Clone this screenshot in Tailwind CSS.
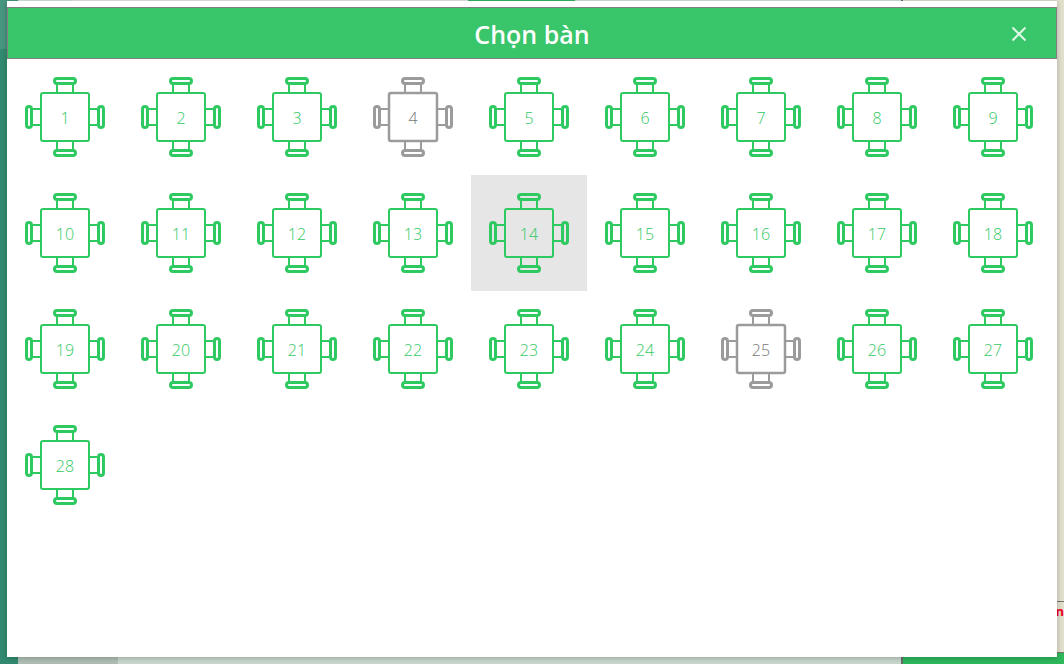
<!DOCTYPE html>
<html lang="vi">
<head>
<meta charset="utf-8">
<meta name="viewport" content="width=device-width, initial-scale=1">
<title>Chọn bàn</title>
<script src="https://cdn.jsdelivr.net/npm/@tailwindcss/browser@4"></script>
</head>
<body class="relative h-screen overflow-hidden font-['Segoe_UI','Open_Sans',sans-serif]">
<!-- Order screen behind the dialog -->
<div class="flex h-full" aria-hidden="true">
  <div class="flex w-[18px] flex-col">
    <div class="h-[49px] bg-[#479780]"></div>
    <div class="grow bg-[#328b70]"></div>
  </div>
  <div class="flex grow flex-col justify-between bg-[#c8d8ce]">
    <div class="flex h-1">
      <div class="w-[54px] bg-[#d3e8dc]"></div>
      <div class="w-[396px] bg-[#e6e8e6]"></div>
      <div class="w-[107px] bg-[#38b565]"></div>
      <div class="grow bg-[#d3e8dc]"></div>
    </div>
    <div class="h-5 w-[100px] bg-[#afbfb5]"></div>
  </div>
  <div class="flex w-[163px] flex-col border-l-2 border-[#6b6b6b] bg-[#e4e0ce]">
    <div class="grow"></div>
    <div class="flex h-[52px] items-start justify-end border-y border-[#77756d] text-[13px] leading-[18px] font-bold text-[#f0001c]">n</div>
    <div class="h-[11px] bg-[#2eb85c]"></div>
  </div>
</div>

<!-- Table picker -->
<section role="dialog" aria-labelledby="title" class="absolute inset-x-[7px] top-px bottom-[7px] flex flex-col bg-white pt-1.5 shadow-[0_1px_6px_rgba(0,0,0,0.25)]">
  <header class="grid h-[52px] grid-cols-[1fr_auto_1fr] items-center border border-[#808080] bg-[#39c569] text-white">
    <h1 id="title" class="col-start-2 pt-0.5 text-[25px] leading-8 font-semibold">Chọn bàn</h1>
    <button type="button" aria-label="Đóng" class="mr-[21px] flex size-8 items-center justify-center justify-self-end pt-px">
      <svg class="size-4" viewBox="0 0 16 16" fill="none" stroke="#e0f8e8" stroke-width="2"><path d="M1.500 1.500 14.500 14.500M14.500 1.500 1.500 14.500"/></svg>
    </button>
  </header>
  <div id="tables" class="flex flex-wrap content-start"></div>
</section>

<!-- Square table with a chair on each side -->
<svg class="hidden" aria-hidden="true">
  <symbol id="table" viewBox="0 0 80 80">
    <g fill="none" stroke="currentColor">
      <rect x="16" y="16" width="48" height="48" rx="2"/>
      <path stroke-width="2" d="M32 8v7M48 8v7M32 65v7M48 65v7M8 32h7M8 48h7M65 32h7M65 48h7"/>
      <g stroke-width="3">
        <rect x="29.500" y="1.500" width="21" height="5" rx="2.500"/>
        <rect x="29.500" y="73.500" width="21" height="5" rx="2.500"/>
        <rect x="1.500" y="29.500" width="5" height="21" rx="2.500"/>
        <rect x="73.500" y="29.500" width="5" height="21" rx="2.500"/>
      </g>
    </g>
  </symbol>
</svg>
<template id="cell">
  <button type="button" class="group grid size-[116px] place-items-center text-[#2fc962] aria-pressed:bg-[#e6e6e6] data-busy:text-[#9b9b9b]">
    <svg class="col-start-1 row-start-1 size-20 stroke-2 group-data-busy:stroke-[2.5px]" aria-hidden="true"><use href="#table"/></svg>
    <span class="col-start-1 row-start-1 pt-px text-base leading-6 font-light group-data-busy:text-[#777777]"></span>
  </button>
</template>
<script>
const busy = [4, 25], selected = 14;
const list = document.getElementById('tables');
const cell = document.getElementById('cell');
for (let n = 1; n <= 28; n++) {
  const button = cell.content.cloneNode(true).firstElementChild;
  button.querySelector('span').textContent = n;
  button.setAttribute('aria-pressed', n === selected);
  if (busy.includes(n)) button.dataset.busy = '';
  list.append(button);
}
</script>
</body>
</html>
